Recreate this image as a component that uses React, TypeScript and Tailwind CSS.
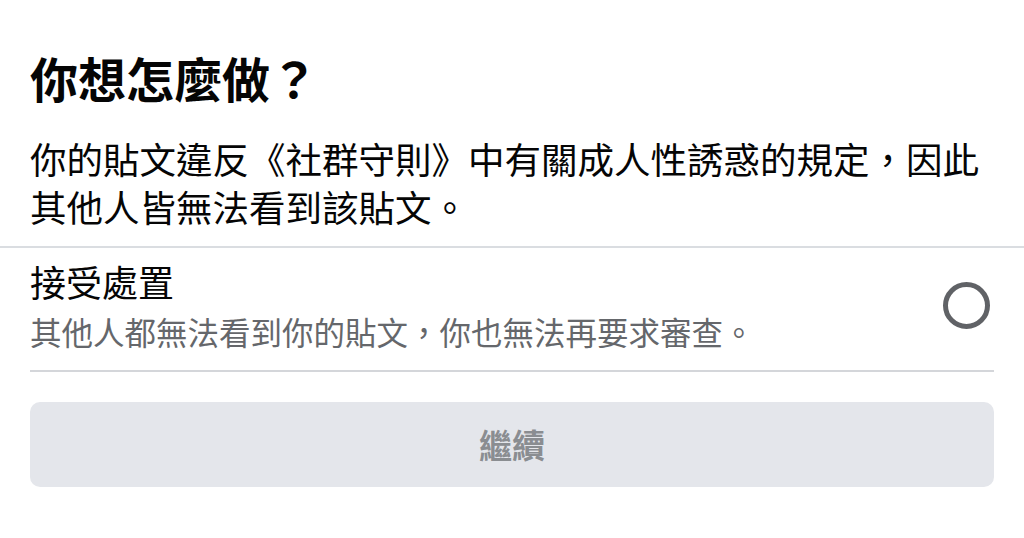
import React from 'react';

const cjk = { fontFamily: '"Noto Sans CJK TC", "Noto Sans", sans-serif' };

export default function App() {
    return (
        <div className="w-[1024px] h-[538px] bg-white overflow-hidden" style={cjk}>
            {/* Header */}
            <div className="px-[30px] pt-[49px]">
                <h1 className="text-[48px] leading-[56px] font-bold text-[#050505]">你想怎麼做？</h1>
                <p className="mt-[30px] text-[36.5px] leading-[48px] text-[#050505] whitespace-nowrap">
                    你的貼文違反《社群守則》中有關成人性誘惑的規定，因此
                    <br />
                    其他人皆無法看到該貼文。
                </p>
            </div>

            <div className="mt-[15px] h-[2px] bg-[#dadde1]" />

            {/* Option */}
            <div className="px-[30px]">
                <div className="flex items-center justify-between pt-[11px] pb-[18px] border-b-2 border-[#d4d6da]">
                    <div>
                        <div className="text-[36px] leading-[44px] font-normal text-[#050505]">接受處置</div>
                        <div className="mt-[7px] text-[31.5px] leading-[42px] text-[#65676b]">
                            其他人都無法看到你的貼文，你也無法再要求審查。
                        </div>
                    </div>
                    <div className="mr-[4px] w-[47px] h-[47px] rounded-full border-[5px] border-[#606266]" />
                </div>

                <button className="mt-[30px] w-full h-[85px] rounded-[10px] bg-[#e4e6eb] text-[33px] font-bold text-[#8a8d91]">
                    繼續
                </button>
            </div>
        </div>
    );
}
